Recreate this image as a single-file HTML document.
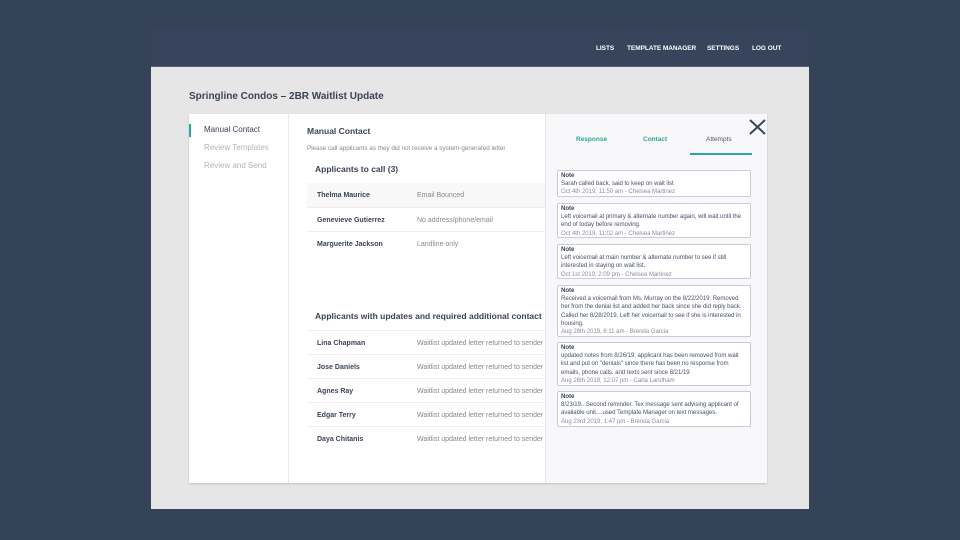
<!DOCTYPE html>
<html><head><meta charset="utf-8"><style>
*{margin:0;padding:0;box-sizing:border-box}
body{width:960px;height:540px;background:#354359;font-family:"Liberation Sans",sans-serif;position:relative;overflow:hidden}
.a{position:absolute}
.frame{left:151px;top:30px;width:658px;height:479px;background:#e6e6e6}
.nav{left:151px;top:30px;width:658px;height:37px;background:#38445b;border-bottom:1px solid #56627a}
.nav span{position:absolute;top:15px;color:#fff;font-size:6.5px;font-weight:bold;letter-spacing:-.05px}
.card{left:189px;top:114px;width:578px;height:369px;background:#fff;box-shadow:0 1px 2px rgba(0,0,0,.15)}
.side{left:189px;top:114px;width:100px;height:369px;border-right:1px solid #e8e8e8}
.t{color:#3a4356}
.row{left:307px;width:238px;border-top:1px solid #eee;height:24px}
.nm{position:absolute;left:10px;top:9px;font-size:7px;font-weight:bold;color:#3a4356}
.st{position:absolute;left:110px;top:9px;font-size:7px;color:#888;white-space:nowrap}
.panel{left:545px;top:114px;width:222px;height:369px;background:#f8f8fa;border-left:1px solid #e6e6e6}
.note{left:557px;width:194px;background:#fff;border:1px solid #c9ccd4;border-radius:2px;padding:1px 3px;font-size:6.1px;line-height:8.2px;color:#4a5266;letter-spacing:-.05px}
.note b{color:#3a4356}
.note i{font-style:normal;color:#8a8f9c}
</style></head><body>
<div class="a frame"></div>
<div class="a nav">
<span style="left:445px">LISTS</span><span style="left:476px">TEMPLATE MANAGER</span><span style="left:556px">SETTINGS</span><span style="left:601px">LOG OUT</span>
</div>
<div class="a t" style="left:189px;top:91px;font-size:10px;font-weight:bold">Springline Condos – 2BR Waitlist Update</div>
<div class="a card"></div>
<div class="a side"></div>
<div class="a" style="left:189px;top:124px;width:2px;height:13px;background:#2aa69a"></div>
<div class="a t" style="left:204px;top:125px;font-size:8px">Manual Contact</div>
<div class="a" style="left:204px;top:143px;font-size:8px;color:#b0b4bc">Review Templates</div>
<div class="a" style="left:204px;top:161px;font-size:8px;color:#b0b4bc">Review and Send</div>
<div class="a t" style="left:307px;top:126px;font-size:8.5px;font-weight:bold">Manual Contact</div>
<div class="a" style="left:307px;top:145px;font-size:6.3px;color:#888">Please call applicants as they did not receive a system-generated letter</div>
<div class="a t" style="left:315px;top:164px;font-size:8.5px;font-weight:bold">Applicants to call (3)</div>
<div class="a row" style="top:183px;background:#f8f8f8;border-top:none"><span class="nm">Thelma Maurice</span><span class="st">Email Bounced</span></div>
<div class="a row" style="top:207px"><span class="nm">Genevieve Gutierrez</span><span class="st">No address/phone/email</span></div>
<div class="a row" style="top:231px"><span class="nm">Marguerite Jackson</span><span class="st">Landline only</span></div>
<div class="a t" style="left:315px;top:311px;font-size:8.5px;font-weight:bold;width:230px;overflow:hidden;white-space:nowrap">Applicants with updates and required additional contact</div>
<div class="a row" style="top:330px"><span class="nm">Lina Chapman</span><span class="st">Waitlist updated letter returned to sender</span></div>
<div class="a row" style="top:354px"><span class="nm">Jose Daniels</span><span class="st">Waitlist updated letter returned to sender</span></div>
<div class="a row" style="top:378px"><span class="nm">Agnes Ray</span><span class="st">Waitlist updated letter returned to sender</span></div>
<div class="a row" style="top:402px"><span class="nm">Edgar Terry</span><span class="st">Waitlist updated letter returned to sender</span></div>
<div class="a row" style="top:426px"><span class="nm">Daya Chitanis</span><span class="st">Waitlist updated letter returned to sender</span></div>
<div class="a panel"></div>
<svg class="a" style="left:749px;top:119px" width="17" height="16"><path d="M1 1L16 15M16 1L1 15" stroke="#38445b" stroke-width="2"/></svg>
<div class="a" style="left:576px;top:136px;font-size:6.5px;font-weight:bold;color:#2aa69a">Response</div>
<div class="a" style="left:643px;top:136px;font-size:6.5px;font-weight:bold;color:#2aa69a">Contact</div>
<div class="a" style="left:706px;top:136px;font-size:6.5px;color:#555">Attempts</div>
<div class="a" style="left:690px;top:153px;width:62px;height:2px;background:#2aa69a"></div>
<div class="a note" style="top:170px;height:27px"><b>Note</b><br>Sarah called back, said to keep on wait list<br><i>Oct 4th 2019, 11:50 am - Chelsea Martinez</i></div>
<div class="a note" style="top:203px;height:35px"><b>Note</b><br>Left voicemail at primary &amp; alternate number again, will wait until the end of today before removing.<br><i>Oct 4th 2019, 11:02 am - Chelsea Martinez</i></div>
<div class="a note" style="top:244px;height:35px"><b>Note</b><br>Left voicemail at main number &amp; alternate number to see if still interested in staying on wait list.<br><i>Oct 1st 2019, 2:09 pm - Chelsea Martinez</i></div>
<div class="a note" style="top:285px;height:52px"><b>Note</b><br>Received a voicemail from Ms. Murray on the 8/22/2019. Removed her from the denial list and added her back since she did reply back. Called her 8/28/2019. Left her voicemail to see if she is interested in housing.<br><i>Aug 28th 2019, 8:11 am - Brenda Garcia</i></div>
<div class="a note" style="top:342px;height:44px"><b>Note</b><br>updated notes from 8/26/19: applicant has been removed from wait list and put on "denials" since there has been no response from emails, phone calls, and texts sent since 8/21/19<br><i>Aug 26th 2019, 12:07 pm - Carla Landham</i></div>
<div class="a note" style="top:391px;height:36px"><b>Note</b><br>8/23/19...Second reminder. Tex message sent advising applicant of available unit....used Template Manager on text messages.<br><i>Aug 23rd 2019, 1:47 pm - Brenda Garcia</i></div>
</body></html>
